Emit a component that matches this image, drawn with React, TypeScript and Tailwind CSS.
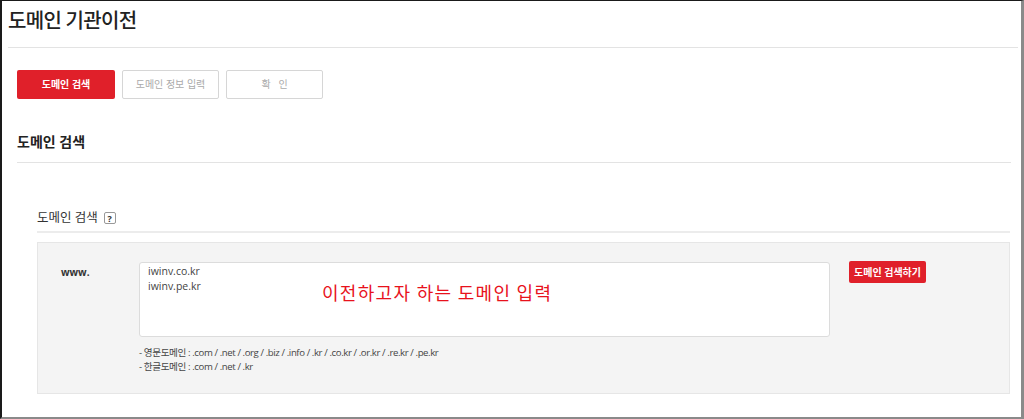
const font = { fontFamily: '"Open Sans", "Noto Sans CJK KR", sans-serif' };

function StepTabs() {
  const steps = ["도메인 검색", "도메인 정보 입력", "확   인"];
  return (
    <div className="flex gap-[7px] pl-[9px]">
      {steps.map((s, i) => (
        <div
          key={s}
          className={
            i === 0
              ? "w-[98px] h-[29px] flex items-center justify-center rounded-[2px] bg-[#e0202a] text-white text-[10px] font-bold"
              : "w-[97px] h-[29px] flex items-center justify-center rounded-[2px] border border-[#d6d6d6] bg-white text-[#aaaaaa] text-[10px] whitespace-pre"
          }
        >
          {s}
        </div>
      ))}
    </div>
  );
}

export default function App() {
  return (
    <div
      className="w-[1024px] h-[419px] bg-white overflow-hidden border-l-2 border-l-[#1a1a1a] border-t border-t-[#1a1a1a] border-r-[3px] border-r-[#8a8a8a] border-b-2 border-b-[#8a8a8a]"
      style={font}
    >
      <div className="pl-[6px] pr-[3px]">
        <h1 className="h-[46px] pt-[6px] text-[20px] leading-[28px] font-medium text-[#222] tracking-[-0.7px]">
          도메인 기관이전
        </h1>
        <div className="h-px bg-[#e3e3e3]" />
        <div className="pt-[22px]">
          <StepTabs />
        </div>
        <div className="mx-[9px] mt-[30px]">
          <h2 className="h-[33px] text-[14px] leading-[26px] font-semibold text-[#222]">
            도메인 검색
          </h2>
          <div className="h-px bg-[#e3e3e3] mr-[-2px]" />
        </div>
        <div className="ml-[29px] mr-[8px] mt-[44px]">
          <div className="flex items-center h-[22px] gap-[6px] text-[12.5px] text-[#333]">
            <span>도메인 검색</span>
            <span className="w-[12px] h-[12px] border border-[#999] rounded-[2px] flex items-center justify-center text-[9px] font-bold leading-none text-[#333]">
              ?
            </span>
          </div>
          <div className="h-[2px] bg-[#ececec] mt-[2px]" />
          <div className="mt-[9px] h-[152px] bg-[#f4f4f4] border border-[#e6e6e6] flex pt-[19px]">
            <div className="w-[101px] pl-[23px] pt-[3px] text-[10px] font-bold text-[#333]">www.</div>
            <div className="w-[691px]">
              <div className="relative h-[75px] bg-white border border-[#dcdcdc] rounded-[3px] px-[8px] pt-[1px] text-[10.5px] leading-[15px] text-[#444]">
                <div>iwinv.co.kr</div>
                <div>iwinv.pe.kr</div>
                <div
                  className="absolute left-[182px] top-[22px] text-[18px] text-[#e8121c] tracking-[1.3px]"
                  style={{ fontFamily: '"Noto Sans CJK KR", sans-serif' }}
                >
                  이전하고자 하는 도메인 입력
                </div>
              </div>
              <div className="mt-[9px] text-[9.6px] leading-[14px] text-[#444] tracking-[-0.4px]">
                <div>- 영문도메인 : .com / .net / .org / .biz / .info / .kr / .co.kr / .or.kr / .re.kr / .pe.kr</div>
                <div>- 한글도메인 : .com / .net / .kr</div>
              </div>
            </div>
            <div className="pl-[19px] -mt-[1px]">
              <button className="block w-[77px] h-[22px] rounded-[2px] bg-[#e0202a] text-white text-[10px] font-semibold">
                도메인 검색하기
              </button>
            </div>
          </div>
        </div>
      </div>
    </div>
  );
}
